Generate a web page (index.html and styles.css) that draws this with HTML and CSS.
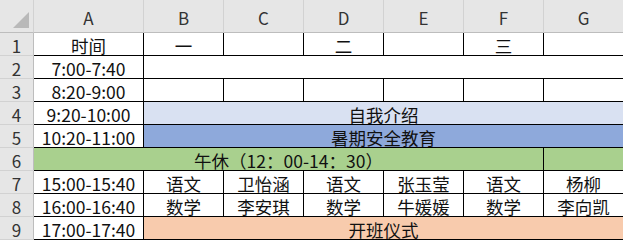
FILE: index.html
```html
<!DOCTYPE html>
<html lang="zh-CN">
<head>
<meta charset="utf-8">
<title>课程表</title>
<link rel="stylesheet" href="styles.css">
</head>
<body>
<div class="sheet">
  <div class="hd corner"><span class="tri"></span></div>
  <div class="hd">A</div>
  <div class="hd">B</div>
  <div class="hd">C</div>
  <div class="hd">D</div>
  <div class="hd">E</div>
  <div class="hd">F</div>
  <div class="hd">G</div>

  <div class="rn">1</div>
  <div class="c">时间</div>
  <div class="c">一</div>
  <div class="c"></div>
  <div class="c">二</div>
  <div class="c"></div>
  <div class="c">三</div>
  <div class="c"></div>

  <div class="rn">2</div>
  <div class="c">7:00-7:40</div>
  <div class="c span6"></div>

  <div class="rn">3</div>
  <div class="c">8:20-9:00</div>
  <div class="c"></div>
  <div class="c"></div>
  <div class="c"></div>
  <div class="c"></div>
  <div class="c"></div>
  <div class="c"></div>

  <div class="rn">4</div>
  <div class="c">9:20-10:00</div>
  <div class="c span6 lav">自我介绍</div>

  <div class="rn">5</div>
  <div class="c">10:20-11:00</div>
  <div class="c span6 blue">暑期安全教育</div>

  <div class="rn">6</div>
  <div class="c span6 green">午休（12：00-14：30）</div>
  <div class="c green"></div>

  <div class="rn">7</div>
  <div class="c">15:00-15:40</div>
  <div class="c">语文</div>
  <div class="c">卫怡涵</div>
  <div class="c">语文</div>
  <div class="c">张玉莹</div>
  <div class="c">语文</div>
  <div class="c">杨柳</div>

  <div class="rn">8</div>
  <div class="c">16:00-16:40</div>
  <div class="c">数学</div>
  <div class="c">李安琪</div>
  <div class="c">数学</div>
  <div class="c">牛媛媛</div>
  <div class="c">数学</div>
  <div class="c">李向凯</div>

  <div class="rn">9</div>
  <div class="c">17:00-17:40</div>
  <div class="c span6 peach">开班仪式</div>
</div>
</body>
</html>
```

FILE: styles.css
```css
html, body {
  margin: 0;
  padding: 0;
  background: #ffffff;
}

body {
  font-family: "Noto Sans CJK SC", "Noto Sans", sans-serif;
  color: #000000;
  overflow: hidden;
}

.sheet {
  display: grid;
  grid-template-columns: 34px 110px repeat(6, 80px);
  grid-template-rows: 33px repeat(9, 23px);
  width: 624px;
}

.sheet > div {
  box-sizing: border-box;
  display: flex;
  align-items: center;
  justify-content: center;
  white-space: nowrap;
  overflow: hidden;
}

/* column letters */
.hd {
  background: #e6e6e6;
  border-right: 1px solid #d2d2d2;
  border-bottom: 1px solid #bdbdbd;
  font-size: 17px;
  color: #333333;
  padding-top: 3px;
}

.corner {
  position: relative;
}

.tri {
  position: absolute;
  right: 4px;
  bottom: 4px;
  width: 0;
  height: 0;
  border-left: 16px solid transparent;
  border-bottom: 16px solid #b9b9b9;
}

/* row numbers */
.rn {
  background: #e6e6e6;
  border-right: 1px solid #bdbdbd;
  border-bottom: 1px solid #d2d2d2;
  font-size: 17px;
  color: #333333;
  padding-top: 2px;
}

/* data cells */
.c {
  border-right: 1px solid #000000;
  border-bottom: 1px solid #000000;
  font-size: 17.5px;
  line-height: 22px;
  padding-top: 3px;
  color: #111111;
}

.span6 {
  grid-column: span 6;
}

.lav { background: #d9e1f2; }
.blue { background: #8ea9db; }
.green { background: #a9d08e; }
.peach { background: #f8cbad; }
```
